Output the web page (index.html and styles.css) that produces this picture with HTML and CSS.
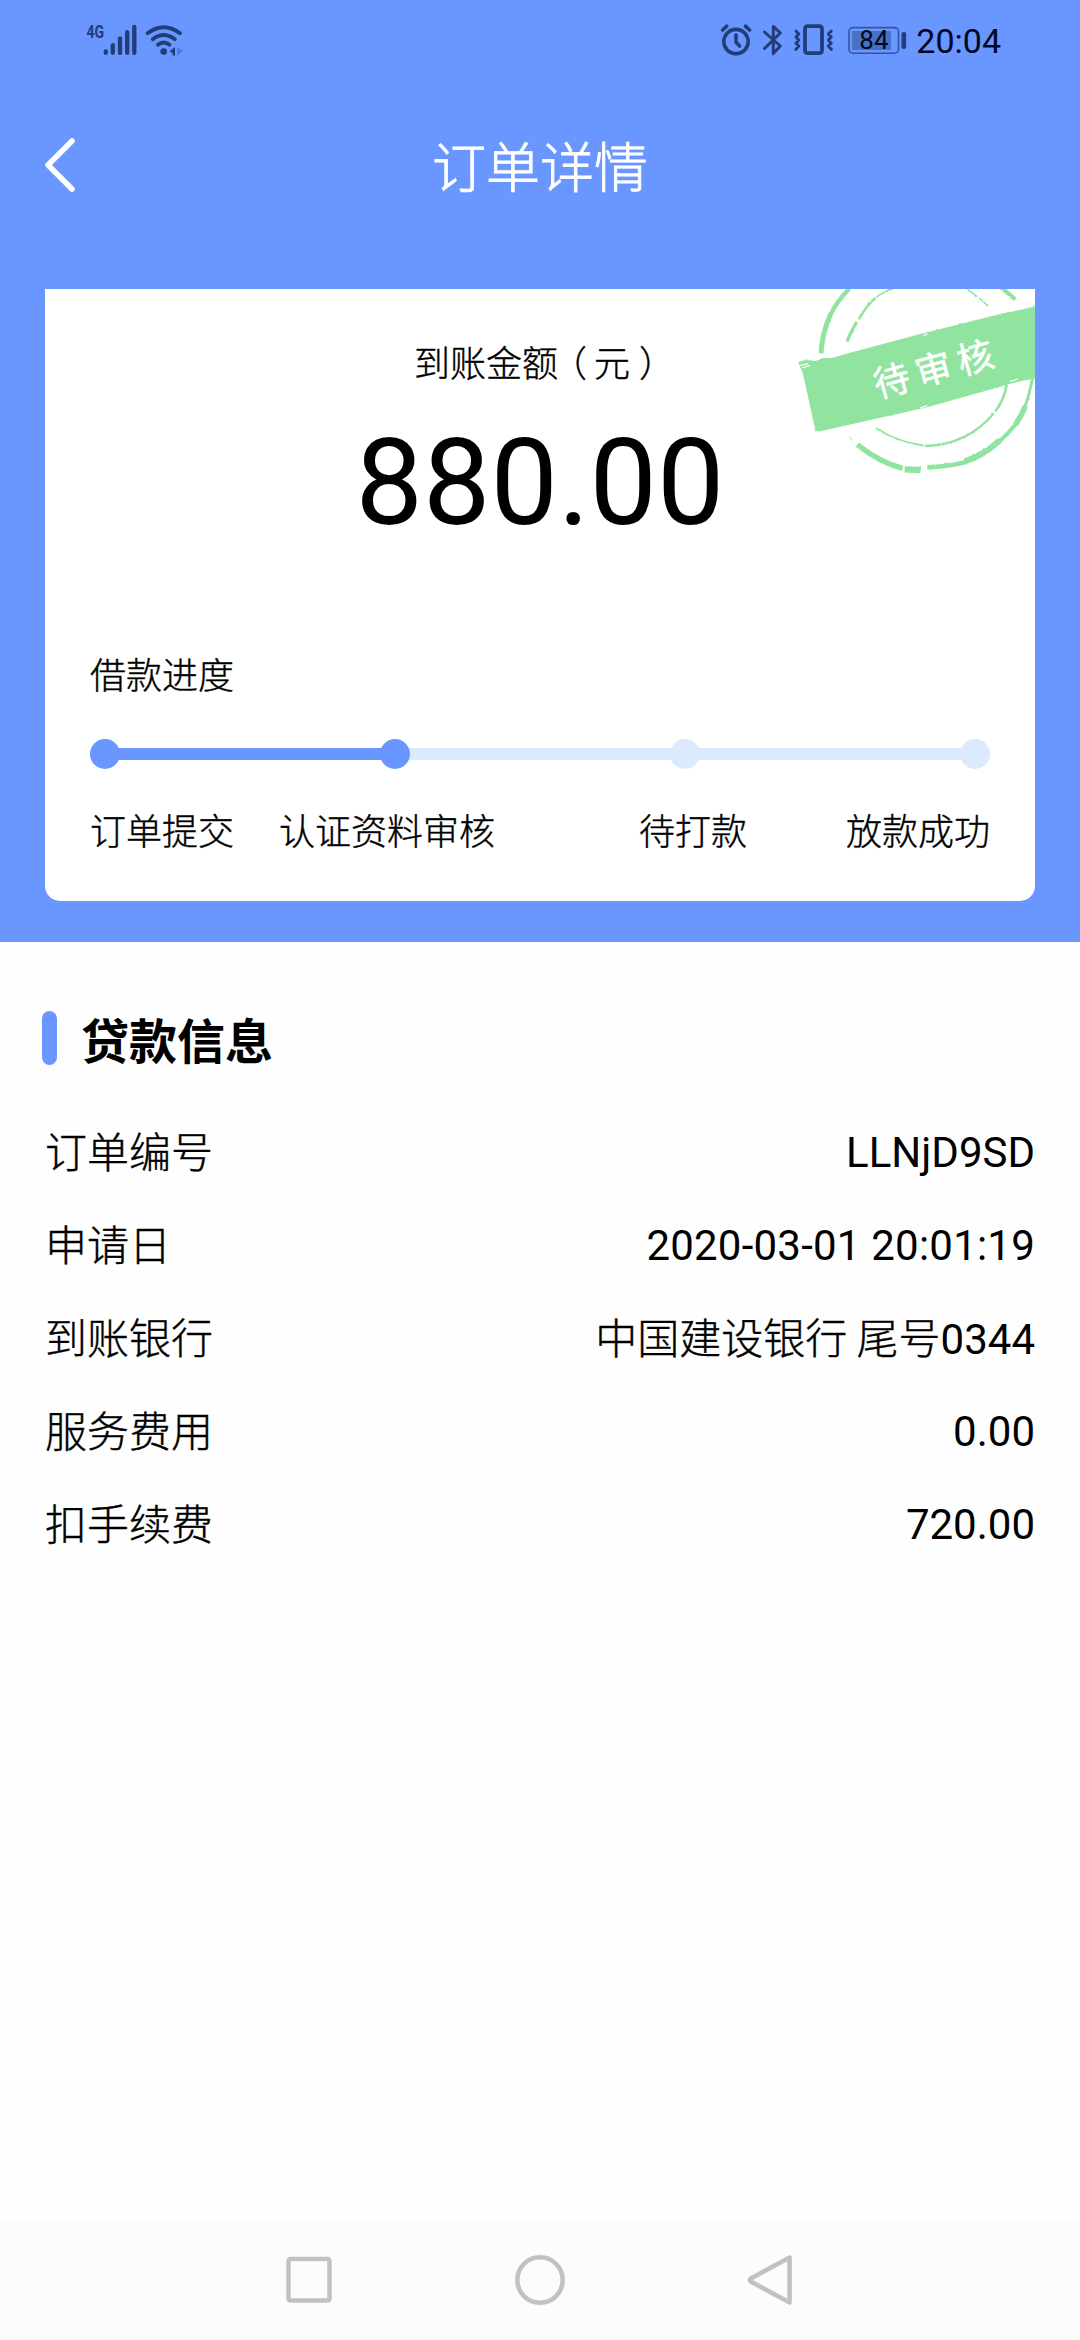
FILE: index.html
```html
<!DOCTYPE html>
<html lang="zh-CN">
<head>
<meta charset="utf-8">
<title>订单详情</title>
<link rel="stylesheet" href="styles.css">
</head>
<body>
<div class="screen">
  <header class="hero">
    <div class="status">
      <svg class="status-left" width="110" height="40" viewBox="80 20 110 40">
        <text class="net" x="86.5" y="38" textLength="17.5" lengthAdjust="spacingAndGlyphs">4G</text>
        <g class="ink-line" stroke-width="4.3">
          <path d="M105.8 51.3v1.6M112.8 45.2v7.7M120 38.5v14.4M127.2 32.2v20.7M134.3 27v25.9"/>
        </g>
        <g class="ink-line" stroke-width="3.8">
          <path d="M147.6 33.2Q163.6 21.2 180 33.2M152.8 39.2Q163.6 30.8 174.8 39.2M158 44.8Q163.6 40.2 169.4 44.8"/>
        </g>
        <circle class="ink" cx="163.7" cy="51.6" r="3.3"/>
        <path class="ink" d="M175 47v8.6h-2.3v-2.4l-3.2-2z"/>
        <path class="ink faint" d="M177 47l6 4-4 3-2 1.6z"/>
      </svg>
      <div class="status-right">
        <svg width="120" height="40" viewBox="716 20 120 40">
          <g class="ink-line" stroke-width="3.6">
            <circle cx="735" cy="41.6" r="12.2"/>
            <path d="M735 35v7l3.6 4"/>
            <path d="M721.6 30l4.2-3.8M748.6 30l-4.2-3.8"/>
          </g>
          <path class="ink-line" stroke-width="3" d="M763.5 32l15.8 14-7 7.6V26.4l7 6.6-15.8 15.5"/>
          <rect class="ink-line" stroke-width="3.8" x="804" y="26.2" width="17" height="27" rx="2.5"/>
          <path class="ink-line" stroke-width="3" d="M795 31l2.8 3-2.8 3 2.8 3-2.8 3.2 2.8 2.8-3 3.4M830.2 31l-2.8 3 2.8 3-2.8 3 2.8 3.2-2.8 2.8 3 3.4"/>
        </svg>
        <svg class="battery" width="60" height="28" viewBox="847 26 60 28">
          <rect class="shell" x="848" y="27.6" width="49.5" height="25.6" rx="4"/>
          <rect class="charge" x="851" y="31" width="39" height="19"/>
          <rect class="ink" x="900.5" y="32" width="4.6" height="17" rx="2"/>
          <text class="percent" x="858.3" y="49.4">84</text>
        </svg>
        <span class="clock">20:04</span>
      </div>
    </div>

    <nav class="titlebar">
      <svg class="back" width="36" height="60" viewBox="0 0 36 60"><path d="M32 6L8 30l24 24"/></svg>
      <h1 class="title">订单详情</h1>
    </nav>

    <section class="card">
      <svg class="stamp" width="250" height="200" viewBox="15 57 750 600">
        <defs>
          <filter id="rough" x="-5%" y="-5%" width="110%" height="110%">
            <feTurbulence type="fractalNoise" baseFrequency="0.12" numOctaves="2" seed="4" result="n"/>
            <feDisplacementMap in="SourceGraphic" in2="n" scale="6" xChannelSelector="R" yChannelSelector="G"/>
          </filter>
        </defs>
        <g class="ring" filter="url(#rough)">
          <path stroke-width="15" d="M123 250Q126 190 152 133"/>
          <path stroke-width="13" d="M150 136Q172 92 208 56"/>
          <path stroke-width="13" d="M660 50L682 68L706 88"/>
          <path stroke-width="9" d="M758 322Q748 376 735 410"/>
          <path stroke-width="17" d="M736 408Q724 438 706 464"/>
          <path stroke-width="12" d="M708 461Q684 492 656 516"/>
          <path stroke-width="18" d="M660 510Q612 556 554 574"/>
          <path stroke-width="14" d="M560 576Q500 590 442 592"/>
          <path stroke-width="19" d="M422 600L374 598"/>
          <path stroke-width="16" d="M368 595Q300 578 232 524"/>
          <path stroke-width="3" d="M216 512l-7-12"/>
          <path stroke-width="10" d="M201 215Q210 190 230 156"/>
          <path stroke-width="8" d="M236 148Q262 104 286 84"/>
          <path stroke-width="5" d="M288 82Q316 62 340 56"/>
          <path stroke-width="5" d="M562 58L592 80M598 84L624 108"/>
          <path stroke-width="8" d="M680 345Q672 390 646 424"/>
          <path stroke-width="7" d="M642 430Q560 526 436 528"/>
          <path stroke-width="5" d="M432 527Q350 516 288 474"/>
        </g>
        <path class="band" filter="url(#rough)" d="M54 276l22-6 30 2 22-8 28 0 40-12 210-56 300-75 80-22V322l-60 10-284 80L107 487 82 370 68 308z"/>
        <g class="scratch">
          <path d="M56 288l28-7M66 294l24-8M100 272l20-5M150 262l16-5M410 190l36-9M430 196l12-4M692 124l72-16M690 334l24-7M420 414l22-7M438 420l6-2"/>
        </g>
        <text class="stamp-text" transform="translate(293 385) rotate(-15.5)">待审核</text>
      </svg>
      <p class="amount-label">到账金额<span class="paren open">（</span>元<span class="paren close">）</span></p>
      <p class="amount">880.00</p>
      <h2 class="progress-title">借款进度</h2>
      <div class="track">
        <i class="dot on"></i><i class="line on"></i><i class="dot on"></i><i class="line"></i><i class="dot"></i><i class="line"></i><i class="dot"></i>
      </div>
      <div class="steps">
        <span>订单提交</span><span class="step-review">认证资料审核</span><span class="step-pay">待打款</span><span class="step-done">放款成功</span>
      </div>
    </section>
  </header>

  <main class="info">
    <h2 class="info-title">贷款信息</h2>
    <dl class="rows">
      <div class="row"><dt>订单编号</dt><dd>LLNjD9SD</dd></div>
      <div class="row"><dt>申请日</dt><dd class="date">2020-03-01 20:01:19</dd></div>
      <div class="row"><dt>到账银行</dt><dd class="bank"><span class="cjk">中国建设银行 尾号</span>0344</dd></div>
      <div class="row"><dt>服务费用</dt><dd>0.00</dd></div>
      <div class="row"><dt>扣手续费</dt><dd>720.00</dd></div>
    </dl>
  </main>

  <footer class="softkeys">
    <svg width="56" height="56" viewBox="0 0 56 56"><rect x="7.5" y="7" width="41" height="41.5" rx="2"/></svg>
    <svg width="56" height="56" viewBox="0 0 56 56"><circle cx="28" cy="28" r="22.7"/></svg>
    <svg width="56" height="56" viewBox="0 0 56 56"><path d="M46.6 5.6v44.8L7.8 29.6q-2-1.6 0-3.2z"/></svg>
  </footer>
</div>
</body>
</html>
```
FILE: styles.css
```css
* { box-sizing: border-box; }
body, h1, h2, p, dl, dd { margin: 0; }
body {
  background: #fefefe;
  color: #000;
  font-family: Roboto, "Noto Sans CJK SC", sans-serif;
}
.screen {
  width: 1080px;
  height: 2340px;
  display: flex;
  flex-direction: column;
}

/* header */
.hero {
  height: 942px;
  background: #6996ff;
}
.status {
  height: 80px;
  padding: 20px 79px 0 80px;
  display: flex;
  justify-content: space-between;
  align-items: flex-start;
}
.status-right {
  display: flex;
  align-items: center;
  height: 40px;
}
.ink { fill: #233d78; }
.faint { opacity: .3; }
.ink-line {
  fill: none;
  stroke: #233d78;
  stroke-linecap: round;
  stroke-linejoin: round;
}
.net { font: bold 19px Roboto, sans-serif; fill: #233d78; }
.battery { margin: 0 8px 0 11px; }
.shell { fill: none; stroke: #35559c; stroke-width: 1.6; }
.charge { fill: #4870c4; }
.percent { font: 26px Roboto, sans-serif; fill: #000820; }
.clock { font-size: 34px; line-height: 42px; padding-top: 2px; color: #000820; }

.titlebar {
  height: 209px;
  padding: 55px 40px 0;
  display: grid;
  grid-template-columns: 36px 1fr 36px;
}
.back path {
  fill: none;
  stroke: #fff;
  stroke-width: 5.5;
  stroke-linecap: round;
  stroke-linejoin: round;
}
.title {
  font: 300 54px/60px "Noto Sans CJK SC", sans-serif;
  color: #fff;
  text-align: center;
  -webkit-text-stroke: .8px #fff;
}

/* amount card */
.card {
  position: relative;
  height: 612px;
  margin: 0 45px;
  padding: 45px 45px 0;
  background: #fff;
  border-radius: 0 0 15px 15px;
}
.stamp {
  position: absolute;
  top: 0;
  right: 0;
}
.ring { fill: none; stroke: #91e49f; }
.band { fill: #91e49f; }
.scratch { fill: none; stroke: #fff; stroke-width: 3.5; }
.stamp-text {
  font: 400 109px "Noto Sans CJK SC", sans-serif;
  letter-spacing: 21px;
  fill: #fff;
  stroke: #fff;
  stroke-width: 1.5px;
}
.amount-label, .progress-title, .steps {
  font: 300 36px/54px "Noto Sans CJK SC", sans-serif;
  -webkit-text-stroke: .4px #000;
}
.amount-label { width: 252px; margin: 0 auto; white-space: nowrap; }
.paren { font-feature-settings: "halt"; }
.paren.open { margin: 0 7px 0 11px; }
.paren.close { margin-left: 9px; }
.amount {
  height: 140px;
  margin-top: 25px;
  font-size: 120px;
  line-height: 140px;
  text-align: center;
}
.progress-title { margin-top: 93px; }
.track {
  display: flex;
  align-items: center;
  height: 30px;
  margin-top: 39px;
}
.dot {
  z-index: 1;
  width: 30px;
  height: 30px;
  border-radius: 50%;
  background: #dbeafd;
}
.line {
  flex: 1;
  height: 12px;
  margin: 0 -3px;
  background: #dbeafd;
}
.dot.on, .line.on { background: #6996ff; }
.steps {
  display: flex;
  margin-top: 33px;
  white-space: nowrap;
}
.step-review { margin-left: 45px; }
.step-pay { margin-left: 144px; }
.step-done { margin-left: auto; }

/* loan details */
.info {
  flex: 1;
  padding: 69px 45px 0;
}
.info-title {
  display: flex;
  align-items: center;
  gap: 24px;
  height: 54px;
  margin-left: -3px;
  font: 700 48px/50px "Noto Sans CJK SC", sans-serif;
}
.info-title::before {
  content: "";
  width: 15px;
  height: 54px;
  border-radius: 7.5px;
  background: #6996ff;
}
.rows { padding-top: 40px; }
.row {
  height: 93px;
  display: flex;
  justify-content: space-between;
  align-items: center;
  font-size: 42px;
  line-height: 62px;
}
.row dt { padding-bottom: 4px; }
.row dd { padding-top: 2px; }
.row .bank { padding-top: 0; }
.row .date { letter-spacing: .22px; }
.row dt, .cjk {
  font-family: "Noto Sans CJK SC", sans-serif;
  font-weight: 300;
  -webkit-text-stroke: .4px #000;
}

/* system navigation */
.softkeys {
  height: 120px;
  padding: 0 281px;
  display: flex;
  justify-content: space-between;
  align-items: center;
  background: #fcfcfc;
}
.softkeys svg {
  fill: none;
  stroke: #c1c1c1;
  stroke-width: 4.5;
  stroke-linejoin: round;
}
```
